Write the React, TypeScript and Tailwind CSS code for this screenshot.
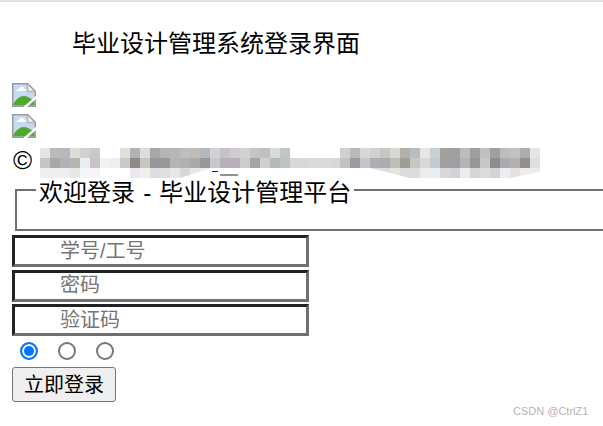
import React from "react";

// mosaic blur over the copyright line, colours per 10px cell, "" = nothing there
const blurRow1 = ["e4e4e2","bdb9b6","b6b8bc","dedcd8","cfd0d0","c9c9cb","","","e2dfdb","b4b2b2","dcdedc","a9a6a6","b3b5b8","b8b6b4","bfbebc","c0bbb6","b6b7ba","d0d3d4","c8c2c8","d3cad0","d0d2d4","c6c3c2","c2c0be","d8dadc","c0c6c4","","","","","","d2d0ce","b9babc","d8d7d4","cfd3d6","c6c6c6","d8d7d4","b3afa9","b8bdc0","e8e6e2","c8d0d4","a3a1a0","a0a09f","bbbcbd","a09d9a","bfbfbf","a0a0a0","bcbdc0","c2c1bf","adacaa","e2e6e9"];
const blurRow2 = ["c9c5c2","a8a8a8","b0b2b6","b9b4b0","e8eef2","c8c3c4","f2f1f0","eceef1","ccc9c6","8e8a8c","c8c5be","94969a","989898","bab4ac","b0b0b0","aaaaa8","989898","c8c8cc","b8b0b8","b8b0b8","ccccc8","a8a4a4","d0d0d4","b8b8bc","bcc4c2","d9d8d8","d9d8d8","dadada","dadada","d9d8d8","c4c2be","9c9c9e","c4c6cb","adaeb2","acacb0","c0bcb6","a09c98","c8c6c0","d8d8d6","c0ccd2","a0a09e","9ca0a4","b4b4b4","989694","c8c8c8","908c8c","a8acb0","b4b0ac","908e8e","dddfe0"];
const blurRow3 = ["efefee","eeeeee","efefef","e8e8e6","f4f6f8","f6f6f6","","","","e8e8ee","f0efee","dedede","e0e0e0","e8e8e8","d8d8da","e8e8ea","f0f0f0","","","","","","","","","","","","","","","f0f0ee","e4e4e4","dcdcdc","dedede","e4e4e2","dcdcdc","dcdcdc","ecece8","e8eef2","d8d8d8","d0d2d4","ececec","d8d6d4","dcdcda","d4d4d8","ecedf0","e4e2e0","ececec","ececec"];

const BrokenImage = () => (
  <svg width="24" height="24" viewBox="0 0 24 24" className="block">
    <path d="M0 0H16L24 8V24H0Z" fill="#c6d9f5" />
    <path d="M1.5 22.5V20.5C4 16.5 8 13 11.5 13C15 13 19 15 22.5 18V22.5Z" fill="#4fa92f" />
    <path d="M4.5 8C4.5 6.5 6 6 7 6C7.5 3 12 3 12.5 6C14 6 15 7 14.5 8Z" fill="#ffffff" />
    <path d="M16 0V8H24L16 0Z" fill="#f1f1f1" />
    <path d="M0.75 24V0.75H15.7L23.25 8.3V24" fill="none" stroke="#9b9b9b" strokeWidth="1.5" />
    <path d="M15.5 1V8.5H23.5" fill="none" stroke="#b5b5b5" strokeWidth="1.5" />
    <path d="M0 23.25H24" fill="none" stroke="#9b9b9b" strokeWidth="1.5" />
    <path d="M25 13.5L12 25" fill="none" stroke="#ffffff" strokeWidth="2.5" />
  </svg>
);

const BlurOverlay = () => (
  <svg width="510" height="30" viewBox="0 0 510 30" className="absolute left-[40px] top-[148px]">
    {[blurRow1, blurRow2, blurRow3].map((row, r) =>
      row.map((c, i) =>
        c ? <rect key={`${r}-${i}`} x={i * 10} y={r * 10} width="10" height="10" fill={`#${c}`} /> : null
      )
    )}
    <path d="M140 30H171L171 20Z" fill="#ffffff" />
    <path d="M310 20H330L370 30H310Z" fill="#ffffff" />
    <path d="M470 30L500 24V30Z" fill="#ffffff" />
    <path d="M172 23.5H178M180 27H198" stroke="#222222" strokeWidth="1.2" />
  </svg>
);

const inputClass =
  "block w-[297px] h-[32px] pl-[45px] pr-[2px] border-[3px] border-t-[#222222] border-l-[#222222] border-b-[#707070] border-r-[#707070] bg-white text-[20px] leading-[26px] text-black placeholder:text-[#757575] outline-none";

const radioClass =
  "m-0 h-[18px] w-[18px] appearance-none rounded-full border-2 border-[#767676] bg-white checked:border-[#0075ff] checked:bg-[#0075ff] checked:shadow-[inset_0_0_0_2px_#ffffff]";

export default function App() {
  return (
    <div
      className="relative h-[426px] w-[603px] overflow-hidden bg-white text-black"
      style={{ fontFamily: '"Liberation Sans", "Noto Sans CJK SC", sans-serif' }}
    >
      <div className="h-[2px] bg-[#e0e0e0]" />
      <h1 className="ml-[72px] mt-[24px] text-[24px] font-normal leading-[36px]">毕业设计管理系统登录界面</h1>

      <div className="ml-[12px] mt-[21px] flex flex-col gap-[7px]">
        <BrokenImage />
        <BrokenImage />
      </div>

      <div className="ml-[13px] mt-[8px] h-[28px] text-[26px] leading-[28px]">©</div>
      <BlurOverlay />

      <fieldset className="ml-[15px] mt-[-1px] h-[58px] w-[640px] border-2 border-[#707070] pl-[19px]">
        <legend className="whitespace-pre px-[3px] pt-[6px] text-[24px] leading-[28px] [word-spacing:1.5px]">欢迎登录 - 毕业设计管理平台</legend>
      </fieldset>

      <div className="ml-[12px] mt-[4px] flex flex-col gap-[2.5px]">
        <input className={inputClass} placeholder="学号/工号" />
        <input className={inputClass} placeholder="密码" />
        <input className={inputClass} placeholder="验证码" />
      </div>

      <div className="ml-[20px] mt-[6px] flex gap-[20px]">
        <input type="radio" name="role" defaultChecked className={radioClass} />
        <input type="radio" name="role" className={radioClass} />
        <input type="radio" name="role" className={radioClass} />
      </div>

      <button className="ml-[12px] mt-[7px] block h-[35px] w-[104px] rounded-[3px] border border-[#767676] bg-[#efefef] text-[20px] leading-[26px]">
        立即登录
      </button>

      <div className="absolute left-[513px] top-[404px] text-[11px] leading-[14px] text-[#b4b4b4]">CSDN @CtrlZ1</div>
    </div>
  );
}
